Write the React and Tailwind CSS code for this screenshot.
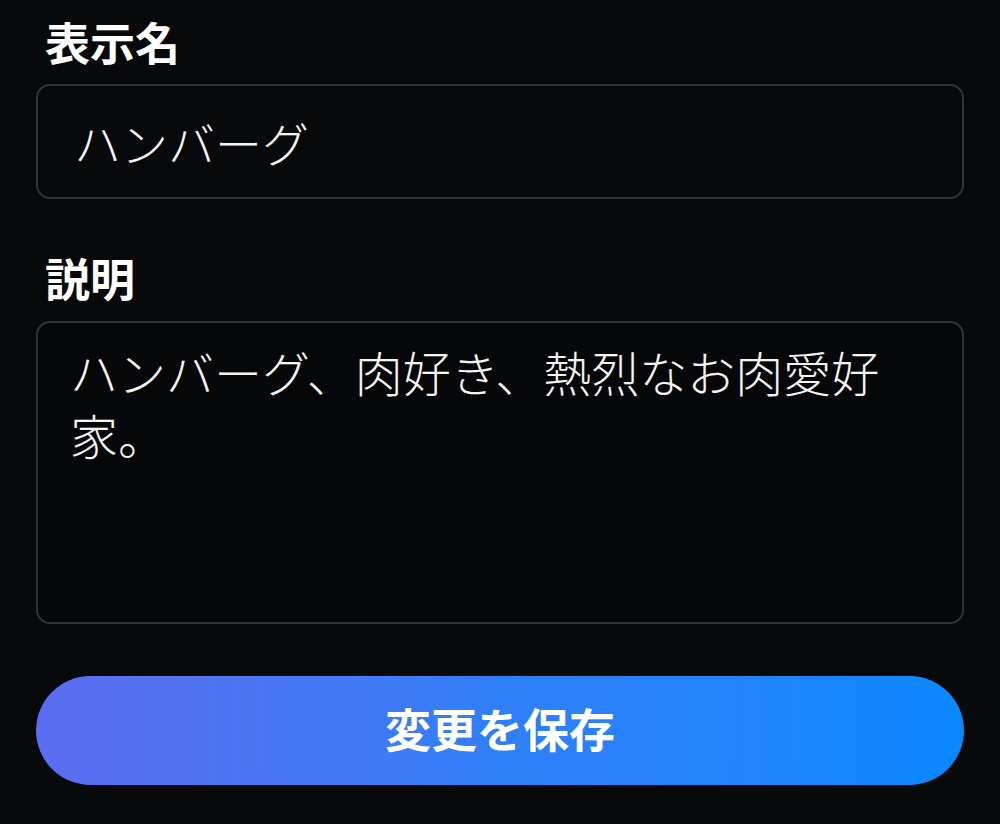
import { useState } from 'react';

const font = { fontFamily: '"Noto Sans CJK JP", "Noto Sans", sans-serif' };

const App = () => {
  const [name, setName] = useState('ハンバーグ');
  const [bio, setBio] = useState('ハンバーグ、肉好き、熱烈なお肉愛好家。');

  return (
    <div className="w-[1000px] h-[824px] bg-[#08090b] px-9 pt-[15px]" style={font}>
      <label className="block text-[45px] leading-[54px] font-bold text-white pl-[9px] mb-[15px]">表示名</label>
      <input
        value={name}
        onChange={(e) => setName(e.target.value)}
        className="block w-full h-[115px] rounded-[14px] border-2 border-[#2f343b] bg-[#08090b] pl-9 pr-6 text-[47px] font-light text-[#f4f4f4] outline-none"
      />

      <label className="block text-[45px] leading-[54px] font-bold text-white pl-[9px] mt-[52px] mb-[16px]">説明</label>
      <textarea
        value={bio}
        onChange={(e) => setBio(e.target.value)}
        className="block w-full h-[303px] rounded-[14px] border-2 border-[#2f343b] bg-[#060708] px-8 pt-[17px] text-[48px] leading-[63px] font-light text-[#f4f4f4] outline-none resize-none"
      />

      <button className="mt-[52px] w-full h-[109px] rounded-full bg-gradient-to-r from-[#5b6cf1] via-[#2f7ff8] to-[#0888ff] text-white text-[46px] font-bold pb-[6px]">
        変更を保存
      </button>
    </div>
  );
};

export default App;
